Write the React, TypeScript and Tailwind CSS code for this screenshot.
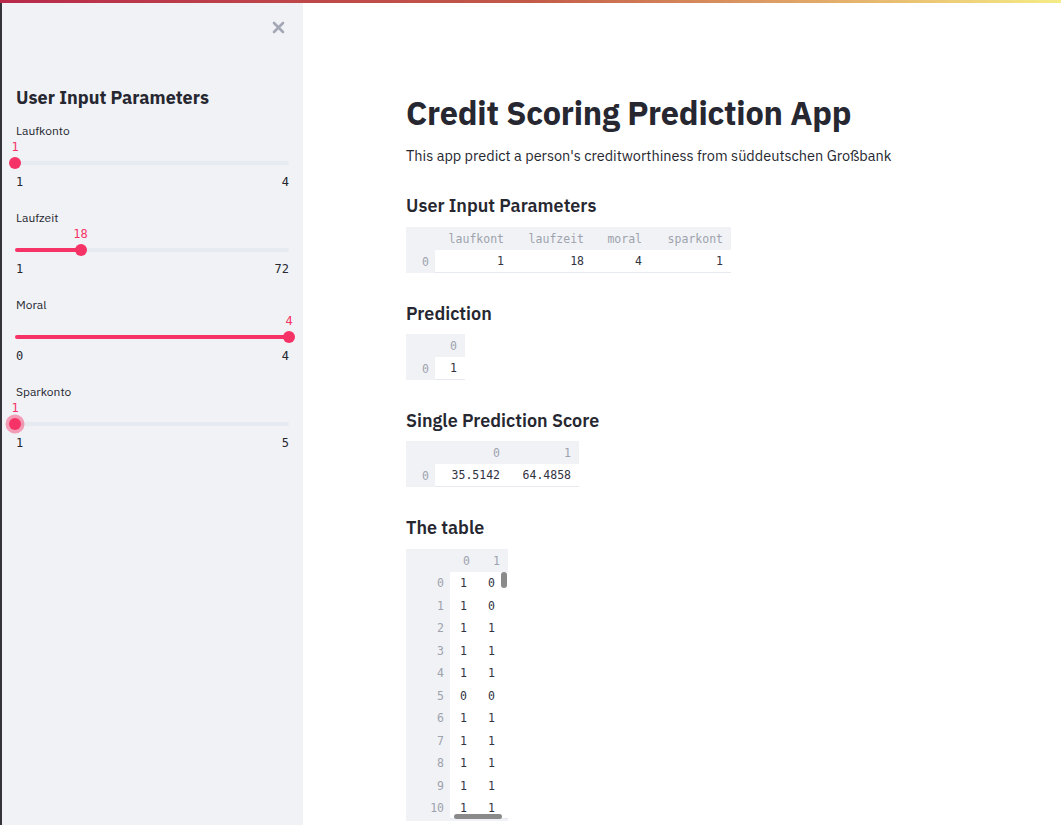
import React from "react";

const sans = "font-['IBM_Plex_Sans','Noto_Sans',sans-serif]";
const mono = "font-['DejaVu_Sans_Mono',monospace]";

interface SliderProps {
  label: string;
  value: number;
  min: number;
  max: number;
  focused?: boolean;
}

function Slider({ label, value, min, max, focused }: SliderProps) {
  const pct = ((value - min) / (max - min)) * 100;
  return (
    <div className="flex flex-col mb-[20px]">
      <div className="h-4 leading-4 pl-[1px] text-[12px] text-[#262730]">{label}</div>
      <div className="relative h-8">
        <div
          className={`absolute top-0 h-4 leading-4 -translate-x-1/2 text-[12px] text-[#f63366] ${mono}`}
          style={{ left: `${pct}%` }}
        >
          {value}
        </div>
        <div className="absolute left-0 right-0 top-[22px] h-[4px] rounded-full bg-[#e6eaf1]">
          <div className="h-full rounded-full bg-[#f63366]" style={{ width: `${pct}%` }} />
        </div>
        <div
          className={`absolute top-[18px] w-3 h-3 -translate-x-1/2 rounded-full bg-[#f63366] ${
            focused ? "shadow-[0_0_0_3.5px_rgba(246,51,102,0.45)]" : ""
          }`}
          style={{ left: `${pct}%` }}
        />
      </div>
      <div className={`mt-[3px] h-4 leading-4 flex justify-between text-[12px] text-[#262730] ${mono}`}>
        <span className="pl-[1px]">{min}</span>
        <span>{max}</span>
      </div>
    </div>
  );
}

interface TableProps {
  columns: string[];
  rows: (string | number)[][];
  indexWidth: string;
  colWidths: string[];
  rowH?: string;
  align?: "right" | "left";
}

function DataTable({ columns, rows, indexWidth, colWidths, rowH = "h-[23px]", align = "right" }: TableProps) {
  return (
    <div className={`flex w-fit flex-col bg-[#f0f2f6] text-[11.5px] ${mono}`}>
      <div className={`flex ${rowH} items-center pt-[2px] text-[#9ea2ad]`}>
        <div className={indexWidth} />
        {columns.map((c, i) => (
          <div key={c + i} className={`${colWidths[i]} text-right pr-[8px]`}>
            {c}
          </div>
        ))}
      </div>
      {rows.map((r, ri) => (
        <div key={ri} className={`flex ${rowH} items-center`}>
          <div className={`${indexWidth} text-right pr-[6px] pt-[2px] text-[#9ea2ad]`}>{ri}</div>
          <div
            className={`flex self-stretch items-center pt-[2px] bg-white text-[#31333f] ${
              ri === rows.length - 1 ? "border-b border-[#e6e9ef]" : ""
            }`}
          >
            {r.map((v, ci) => (
              <div
                key={ci}
                className={`${colWidths[ci]} ${align === "right" ? "text-right pr-[8px]" : "text-left pl-[10px]"}`}
              >
                {v}
              </div>
            ))}
          </div>
        </div>
      ))}
    </div>
  );
}

const bigRows = [
  [1, 0], [1, 0], [1, 1], [1, 1], [1, 1], [0, 0], [1, 1], [1, 1], [1, 1], [1, 1], [1, 1],
];

export default function App() {
  return (
    <div className={`relative w-[1061px] h-[825px] overflow-hidden bg-white ${sans}`}>
      <div className="absolute top-0 left-0 right-0 h-[3px] z-10 bg-gradient-to-r from-[#b8284a] via-[#c25a48] to-[#f5ec86]" />
      <div className="flex h-full">
        <aside className="relative w-[303px] shrink-0 h-full bg-[#f0f2f6] pl-[13px] pr-[14px] border-l-2 border-[#34343a]">
          <button className="absolute top-[21px] right-[18px] text-[#a3a8b4]">
            <svg width="13" height="13" viewBox="0 0 13 13">
              <path d="M2 2 L11 11 M11 2 L2 11" stroke="currentColor" strokeWidth="2.6" strokeLinecap="round" />
            </svg>
          </button>
          <h2 className="mt-[86px] h-6 leading-6 pl-[1px] text-[18px] font-bold text-[#262730]">User Input Parameters</h2>
          <div className="mt-[13px]">
            <Slider label="Laufkonto" value={1} min={1} max={4} />
            <Slider label="Laufzeit" value={18} min={1} max={72} />
            <Slider label="Moral" value={4} min={0} max={4} />
            <Slider label="Sparkonto" value={1} min={1} max={5} focused />
          </div>
        </aside>
        <main className="flex-1 pl-[103px] text-[#262730]">
          <h1 className="mt-[95px] h-9 leading-9 text-[32.5px] font-bold tracking-[-0.2px]">Credit Scoring Prediction App</h1>
          <p className="mt-[15px] h-5 leading-5 text-[14.5px]">
            This app predict a person's creditworthiness from süddeutschen Großbank
          </p>
          <h3 className="mt-[28px] h-6 leading-6 text-[18px] font-semibold">User Input Parameters</h3>
          <div className="mt-[9px]">
            <DataTable
              columns={["laufkont", "laufzeit", "moral", "sparkont"]}
              rows={[[1, 18, 4, 1]]}
              indexWidth="w-[29px]"
              colWidths={["w-[77px]", "w-[80px]", "w-[58px]", "w-[81px]"]}
            />
          </div>
          <h3 className="mt-[29px] h-6 leading-6 text-[18px] font-semibold">Prediction</h3>
          <div className="mt-[8px]">
            <DataTable columns={["0"]} rows={[[1]]} indexWidth="w-[29px]" colWidths={["w-[30px]"]} />
          </div>
          <h3 className="mt-[29px] h-6 leading-6 text-[18px] font-semibold">Single Prediction Score</h3>
          <div className="mt-[8px]">
            <DataTable
              columns={["0", "1"]}
              rows={[["35.5142", "64.4858"]]}
              indexWidth="w-[29px]"
              colWidths={["w-[73px]", "w-[71px]"]}
            />
          </div>
          <h3 className="mt-[29px] h-6 leading-6 text-[18px] font-semibold">The table</h3>
          <div className="relative mt-[9px] w-[102px] h-[272px] overflow-hidden bg-[#f0f2f6]">
            <DataTable
              columns={["0", "1"]}
              rows={bigRows}
              indexWidth="w-[44px]"
              colWidths={["w-[28px]", "w-[30px]"]}
              rowH="h-[22.5px]"
              align="left"
            />
            <div className="absolute left-[95px] top-[23px] w-[6px] h-[16px] rounded-full bg-[#8a8a8a]" />
            <div className="absolute left-[48px] top-[265px] w-[48px] h-[5px] rounded-full bg-[#8a8a8a]" />
          </div>
        </main>
      </div>
    </div>
  );
}
